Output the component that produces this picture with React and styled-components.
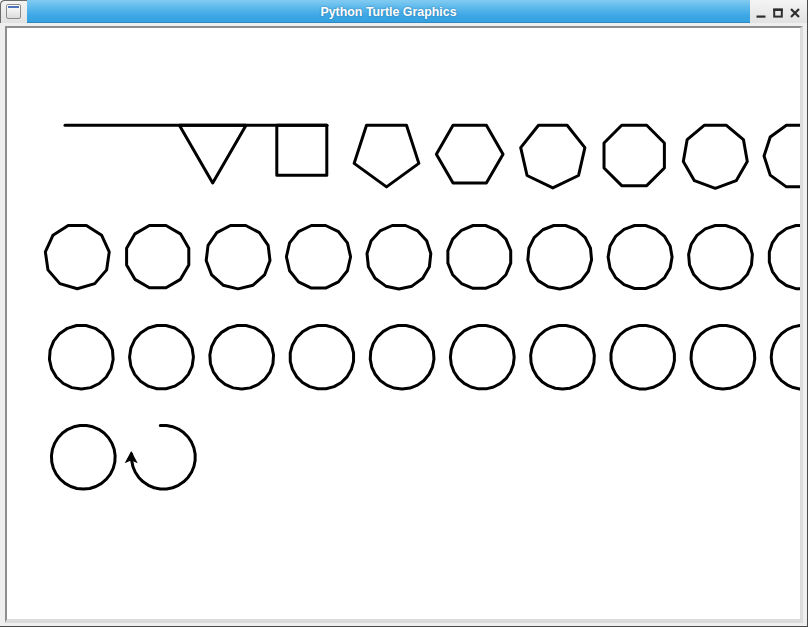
import React from "react";
import styled, { createGlobalStyle } from "styled-components";

const Global = createGlobalStyle`
  html, body { margin: 0; padding: 0; background: #ffffff; }
  body { font-family: "Liberation Sans", Arial, sans-serif; }
`;

const Window = styled.div`
  width: 807px;
  height: 626px;
  background: #efefef;
  border-right: 1px solid #4a4a4a;
  border-bottom: 1px solid #4a4a4a;
  display: flex;
  flex-direction: column;
  border-top-left-radius: 4px;
  overflow: hidden;
`;

const TitleBar = styled.div`
  height: 23px;
  display: flex;
  flex: none;
`;

const IconZone = styled.div`
  width: 27px;
  background: linear-gradient(#f4f4f4, #e2e2e2);
  border-top-left-radius: 4px;
  box-shadow: inset 1px 1px 0 #6a6a6a;
  display: flex;
  align-items: flex-start;
  justify-content: center;
  padding-top: 4px;
  box-sizing: border-box;
`;

const AppIcon = styled.div`
  width: 15px;
  height: 15px;
  box-sizing: border-box;
  border: 1px solid #8c8c8c;
  border-radius: 2px;
  background: linear-gradient(#ffffff, #dcdcdc);
  position: relative;
  &::before {
    content: "";
    position: absolute;
    left: 1px;
    right: 1px;
    top: 1px;
    height: 2px;
    background: #4d74b8;
  }
`;

const TitleCenter = styled.div`
  flex: 1;
  background: linear-gradient(#82cbf2 0%, #5cb9ec 35%, #3ea8e6 70%, #35a1df 100%);
  border-bottom: 1px solid #2f88c0;
  box-sizing: border-box;
  display: flex;
  align-items: center;
  justify-content: center;
  color: #ffffff;
  font-family: "Liberation Sans", Arial, sans-serif;
  font-weight: bold;
  font-size: 12.4px;
  text-shadow: 0 0 2px rgba(20, 70, 110, 0.6);
  padding-top: 1px;
`;

const Controls = styled.div`
  width: 57px;
  background: linear-gradient(#f4f4f4, #e2e2e2);
  display: flex;
  align-items: center;
  justify-content: flex-end;
  padding: 3px 4px 0 0;
  box-sizing: border-box;
`;

const CtlButton = styled.div`
  width: 17px;
  height: 14px;
  display: flex;
  align-items: center;
  justify-content: center;
  svg { display: block; }
`;

const Body = styled.div`
  flex: 1;
  padding: 3px 4px 3px 5px;
  display: flex;
  box-sizing: border-box;
`;

const CanvasFrame = styled.div`
  flex: 1;
  background: #ffffff;
  border-left: 2px solid #8e8e8e;
  border-top: 2px solid #8e8e8e;
  border-right: 3px solid #dcdcdc;
  border-bottom: 4px solid #dcdcdc;
  overflow: hidden;
  display: flex;
  svg { display: block; }
`;

const TAU = Math.PI * 2;

function polyPts(n, x0, y0, edges = n) {
  const s = 200 / n;
  let x = x0;
  let y = y0;
  let h = 0;
  const pts = [[x, y]];
  for (let i = 0; i < edges; i++) {
    x += s * Math.cos(h);
    y += s * Math.sin(h);
    pts.push([x, y]);
    h += TAU / n;
  }
  return pts.map((p) => p[0].toFixed(2) + "," + p[1].toFixed(2)).join(" ");
}

const rows = [];
const row1 = [212.7, 301.8, 386.5, 469.7, 552.8, 634.2, 715.3, 796.4];
row1.forEach((c, i) => rows.push({ n: 3 + i, c, y: 125.3 }));
for (let k = 0; k < 10; k++) rows.push({ n: 11 + k, c: 77.3 + 80.4 * k, y: 225.5 });
for (let k = 0; k < 10; k++) rows.push({ n: 21 + k, c: 81.3 + 80.2 * k, y: 325.5 });
rows.push({ n: 31, c: 83.3, y: 425.5 });

function Drawing() {
  const partialN = 32;
  const pc = 163.4;
  return (
    <svg width="793" height="591" viewBox="7 28 793 591">
      <g fill="none" stroke="#000" strokeWidth="3" strokeLinejoin="round" strokeLinecap="round">
        <polyline points="65,125.3 327,125.3" />
        {rows.map((r) => (
          <polygon key={r.n} points={polyPts(r.n, r.c - 100 / r.n, r.y)} />
        ))}
        <polyline points={polyPts(partialN, pc - 100 / partialN, 425.5, 25)} />
      </g>
      <polygon
        points="131.2,452.2 126,462 131.2,459.8 136.4,462"
        fill="#000"
        stroke="#000"
        strokeWidth="1.2"
        strokeLinejoin="miter"
      />
    </svg>
  );
}

export default function App() {
  return (
    <>
      <Global />
      <Window>
        <TitleBar>
          <IconZone>
            <AppIcon />
          </IconZone>
          <TitleCenter>Python Turtle Graphics</TitleCenter>
          <Controls>
            <CtlButton>
              <svg width="10" height="10" viewBox="0 0 10 10">
                <rect x="0.5" y="7.5" width="9" height="2.2" fill="#2e2e2e" />
              </svg>
            </CtlButton>
            <CtlButton>
              <svg width="10" height="10" viewBox="0 0 10 10">
                <rect x="1.2" y="1.6" width="7.6" height="7" fill="none" stroke="#2e2e2e" strokeWidth="2" />
                <rect x="0.2" y="0.6" width="9.6" height="2.4" fill="#2e2e2e" />
              </svg>
            </CtlButton>
            <CtlButton>
              <svg width="10" height="10" viewBox="0 0 10 10">
                <path d="M1 1 L9 9 M9 1 L1 9" stroke="#2e2e2e" strokeWidth="2.2" />
              </svg>
            </CtlButton>
          </Controls>
        </TitleBar>
        <Body>
          <CanvasFrame>
            <Drawing />
          </CanvasFrame>
        </Body>
      </Window>
    </>
  );
}
